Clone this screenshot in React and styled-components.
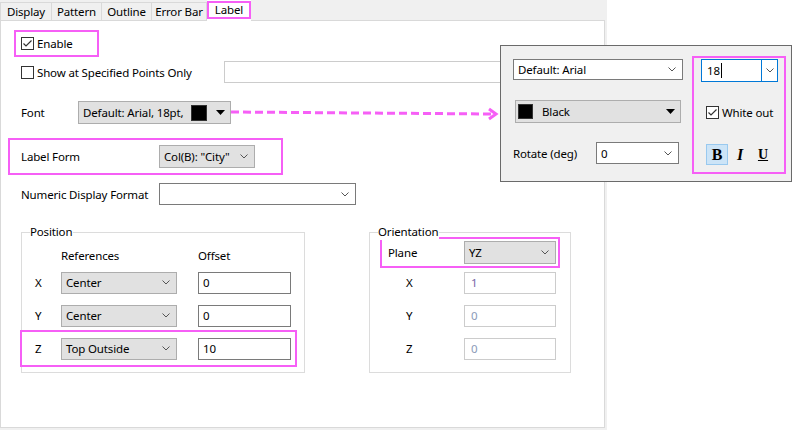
import React from 'react';
import styled, { createGlobalStyle } from 'styled-components';

const MAGENTA = '#f65ff6';

const GlobalStyle = createGlobalStyle`
  html, body { margin: 0; padding: 0; background: #fff; }
  body {
    font-family: "Segoe UI", "Noto Sans", "Open Sans", sans-serif;
    font-size: 11.5px;
    letter-spacing: -0.15px;
    color: #000;
  }
  * { box-sizing: border-box; }
`;

const Page = styled.div`
  position: relative;
  width: 797px;
  height: 430px;
  overflow: hidden;
`;

const Dialog = styled.div`
  width: 607px;
  height: 430px;
  background: #f0f0f0;
  display: flex;
  flex-direction: column;
`;

const TabStrip = styled.div`
  display: flex;
  align-items: flex-end;
  height: 20px;
`;

const Tab = styled.div`
  position: relative;
  width: ${p => p.w}px;
  height: ${p => (p.active ? 21 : 18)}px;
  margin-bottom: ${p => (p.active ? -1 : 0)}px;
  z-index: ${p => (p.active ? 1 : 0)};
  background: ${p => (p.active ? '#fff' : '#f0f0f0')};
  border: ${p => (p.active ? 'none' : '1px solid #d9d9d9')};
  border-bottom: none;
  border-right: ${p => (p.last ? '1px solid #d9d9d9' : 'none')};
  padding: ${p => (p.active ? '1px 0 2px 0' : '0')};
  display: flex;
  align-items: center;
  justify-content: center;
  line-height: 16px;
  white-space: nowrap;
`;

const ActiveTabLabel = styled.div`
  width: 100%;
  height: 18px;
  border: 2px solid ${MAGENTA};
  display: flex;
  align-items: center;
  justify-content: center;
`;

const Body = styled.div`
  width: 605px;
  height: 408px;
  background: #fff;
  border: 1px solid #d9d9d9;
  padding-top: 9px;
  display: flex;
  flex-direction: column;
`;

const Row = styled.div`
  display: flex;
  align-items: center;
  height: ${p => p.h}px;
  margin-top: ${p => p.mt || 0}px;
  padding-left: 20px;
`;

const HighlightRow = styled.div`
  display: flex;
  align-items: center;
  width: ${p => p.w}px;
  height: ${p => p.h}px;
  margin-top: ${p => p.mt || 0}px;
  margin-left: ${p => p.ml}px;
  padding-left: ${p => p.pl}px;
  border: 2px solid ${MAGENTA};
`;

const Label = styled.span`
  display: inline-block;
  width: ${p => (p.w ? `${p.w}px` : 'auto')};
  flex-shrink: 0;
  white-space: nowrap;
`;

const CheckLabel = styled.label`
  display: flex;
  align-items: center;
  gap: 3px;
  width: ${p => (p.w ? `${p.w}px` : 'auto')};
  white-space: nowrap;
`;

const Box = styled.span`
  width: 13px;
  height: 13px;
  border: 1px solid #333;
  background: #fff;
  display: inline-flex;
  align-items: center;
  justify-content: center;
  flex-shrink: 0;
`;

const TextField = styled.div`
  width: ${p => p.w}px;
  height: ${p => p.h || 22}px;
  border: 1px solid ${p => (p.disabled ? '#cccccc' : '#7a7a7a')};
  background: #fff;
  color: ${p => p.tone || '#000'};
  padding-left: ${p => p.pl || 4}px;
  display: flex;
  align-items: center;
  flex-shrink: 0;
`;

const Combo = styled.div`
  width: ${p => p.w}px;
  height: ${p => p.h || 22}px;
  border: 1px solid ${p => (p.flat ? '#adadad' : '#7a7a7a')};
  background: ${p => (p.flat ? '#e1e1e1' : '#fff')};
  padding: 0 6px 0 4px;
  display: flex;
  align-items: center;
  justify-content: space-between;
  flex-shrink: 0;
  white-space: nowrap;
`;

const Swatch = styled.span`
  display: inline-block;
  width: ${p => p.s}px;
  height: ${p => p.s}px;
  background: #000;
  border: 1px solid #333;
  flex-shrink: 0;
`;

const FontButton = styled.div`
  width: 153px;
  height: 23px;
  border: 1px solid #adadad;
  background: #e1e1e1;
  display: flex;
  align-items: center;
  padding-left: 4px;
  white-space: nowrap;
`;

const FontText = styled.span`
  width: 108px;
  flex-shrink: 0;
`;

const TriHolder = styled.span`
  display: flex;
  margin-left: ${p => p.ml || 0}px;
`;

const Group = styled.div`
  position: relative;
  width: ${p => p.w}px;
  height: 141px;
  border: 1px solid #dcdcdc;
  display: flex;
  flex-direction: column;
`;

const Legend = styled.span`
  position: absolute;
  top: -9px;
  left: 8px;
  background: #fff;
  padding: 0 1px 0 0;
  line-height: 16px;
`;

const GroupsRow = styled.div`
  display: flex;
  gap: 64px;
  margin-top: 27px;
  padding-left: 20px;
`;

const HeaderRow = styled.div`
  display: flex;
  align-items: center;
  height: 21px;
  margin-top: 12px;
  padding-left: 39px;
`;

const GridRow = styled.div`
  display: flex;
  align-items: center;
  width: ${p => (p.w ? `${p.w}px` : 'auto')};
  height: 33px;
  padding-left: ${p => p.pl}px;
  margin-top: ${p => p.mt || 0}px;
  outline: ${p => (p.mark ? `2px solid ${MAGENTA}` : 'none')};
`;

const Spacer = styled.span`
  width: ${p => p.w}px;
  flex-shrink: 0;
`;

const PlaneRow = styled.div`
  display: flex;
  align-items: center;
  width: 180px;
  height: 31px;
  margin: 4px 0 0 10px;
  padding-left: 6px;
  border: 2px solid ${MAGENTA};
`;

const Popup = styled.div`
  position: absolute;
  left: 500px;
  top: 45px;
  width: 292px;
  height: 137px;
  background: #f0f0f0;
  border: 1px solid #6a6a6a;
  padding: 13px 0 0 12px;
  display: flex;
  align-items: flex-start;
  gap: 9px;
`;

const PopLeft = styled.div`
  width: 170px;
  display: flex;
  flex-direction: column;
`;

const ColorButton = styled.div`
  width: 166px;
  height: 23px;
  margin: 20px 0 0 2px;
  border: 1px solid #adadad;
  background: #e1e1e1;
  display: flex;
  align-items: center;
  padding: 0 5px 0 2px;
  gap: 9px;
`;

const ColorName = styled.span`
  flex: 1;
`;

const RotateRow = styled.div`
  display: flex;
  align-items: center;
  height: 22px;
  margin-top: 19px;
`;

const PopRight = styled.div`
  width: 94px;
  height: 118px;
  margin-top: -3px;
  border: 2px solid ${MAGENTA};
  padding: 1px 0 0 7px;
  display: flex;
  flex-direction: column;
`;

const SizeCombo = styled.div`
  width: 77px;
  height: 23px;
  border: 1px solid #0078d7;
  background: #fff;
  display: flex;
`;

const SizeText = styled.div`
  flex: 1;
  display: flex;
  align-items: center;
  padding-left: 5px;
  border-right: 1px solid #0078d7;
`;

const Caret = styled.span`
  display: inline-block;
  width: 1px;
  height: 15px;
  background: #000;
  margin-left: 1px;
`;

const SizeDrop = styled.div`
  width: 15px;
  display: flex;
  align-items: center;
  justify-content: center;
`;

const StyleRow = styled.div`
  display: flex;
  align-items: center;
  gap: 1px;
  margin-top: ${p => p.mt}px;
  height: ${p => p.h}px;
  padding-left: 5px;
`;

const StyleButton = styled.div`
  width: 22px;
  height: 21px;
  display: flex;
  align-items: center;
  justify-content: center;
  background: ${p => (p.on ? '#cce4f7' : 'transparent')};
  border: 1px solid ${p => (p.on ? '#99c9ef' : 'transparent')};
  font-family: "Liberation Serif", "Times New Roman", serif;
  font-weight: bold;
  letter-spacing: 0;
  font-size: ${p => p.fs || 15}px;
  font-style: ${p => (p.italic ? 'italic' : 'normal')};
  text-decoration: ${p => (p.under ? 'underline' : 'none')};
`;

const ArrowLayer = styled.svg`
  position: absolute;
  left: 0;
  top: 0;
  pointer-events: none;
`;

const Chevron = () => (
  <svg width="8" height="5" viewBox="0 0 8 5">
    <polyline points="0.5,0.5 4,4 7.5,0.5" fill="none" stroke="#555" strokeWidth="1" />
  </svg>
);

const DownTri = () => (
  <svg width="9" height="5" viewBox="0 0 9 5">
    <polygon points="0,0 9,0 4.5,5" fill="#000" />
  </svg>
);

const CheckBox = ({ checked }) => (
  <Box>
    {checked && (
      <svg width="11" height="11" viewBox="0 0 11 11">
        <polyline points="1.5,5.5 4,8 9.5,2.5" fill="none" stroke="#333" strokeWidth="1.2" />
      </svg>
    )}
  </Box>
);

const tabs = [
  { name: 'Display', w: 51 },
  { name: 'Pattern', w: 50 },
  { name: 'Outline', w: 50 },
  { name: 'Error Bar', w: 56 },
  { name: 'Label', w: 44, active: true },
];

const positionRows = [
  { axis: 'X', ref: 'Center', offset: '0' },
  { axis: 'Y', ref: 'Center', offset: '0' },
  { axis: 'Z', ref: 'Top Outside', offset: '10', mark: true },
];

const orientRows = [
  { axis: 'X', value: '1', tone: '#7466a6' },
  { axis: 'Y', value: '0', tone: '#8c9bb8' },
  { axis: 'Z', value: '0', tone: '#8c9bb8' },
];

export default function App() {
  return (
    <Page>
      <GlobalStyle />
      <Dialog>
        <TabStrip>
          {tabs.map((t, i) => (
            <Tab key={t.name} w={t.w} active={t.active} last={i === tabs.length - 2}>
              {t.active ? <ActiveTabLabel>{t.name}</ActiveTabLabel> : t.name}
            </Tab>
          ))}
        </TabStrip>
        <Body>
          <HighlightRow w={85} h={27} ml={13} pl={5}>
            <CheckLabel>
              <CheckBox checked />
              Enable
            </CheckLabel>
          </HighlightRow>

          <Row h={22} mt={4}>
            <CheckLabel w={203}>
              <CheckBox />
              Show at Specified Points Only
            </CheckLabel>
            <TextField w={300} disabled />
          </Row>

          <Row h={23} mt={18}>
            <Label w={57}>Font</Label>
            <FontButton>
              <FontText>Default: Arial, 18pt,</FontText>
              <Swatch s={16} />
              <TriHolder ml={9}>
                <DownTri />
              </TriHolder>
            </FontButton>
          </Row>

          <HighlightRow w={275} h={37} mt={14} ml={7} pl={11}>
            <Label w={138}>Label Form</Label>
            <Combo w={96} h={23} flat>
              <span>Col(B): "City"</span>
              <Chevron />
            </Combo>
          </HighlightRow>

          <Row h={22} mt={8}>
            <Label w={138}>Numeric Display Format</Label>
            <Combo w={197}>
              <span />
              <Chevron />
            </Combo>
          </Row>

          <GroupsRow>
            <Group w={284}>
              <Legend>Position</Legend>
              <HeaderRow>
                <Label w={137}>References</Label>
                <Label>Offset</Label>
              </HeaderRow>
              {positionRows.map(r => (
                <GridRow key={r.axis} pl={13} w={273} mark={r.mark}>
                  <Label w={26}>{r.axis}</Label>
                  <Combo w={116} flat>
                    <span>{r.ref}</span>
                    <Chevron />
                  </Combo>
                  <Spacer w={21} />
                  <TextField w={93}>{r.offset}</TextField>
                </GridRow>
              ))}
            </Group>

            <Group w={202}>
              <Legend>Orientation</Legend>
              <PlaneRow>
                <Label w={76}>Plane</Label>
                <Combo w={92} h={23} flat>
                  <span>YZ</span>
                  <Chevron />
                </Combo>
              </PlaneRow>
              {orientRows.map((r, i) => (
                <GridRow key={r.axis} pl={36} mt={i === 0 ? -2 : 0}>
                  <Label w={58}>{r.axis}</Label>
                  <TextField w={92} disabled tone={r.tone} pl={6}>
                    {r.value}
                  </TextField>
                </GridRow>
              ))}
            </Group>
          </GroupsRow>
        </Body>
      </Dialog>

      <ArrowLayer width="797" height="430">
        <line x1="231" y1="112" x2="493" y2="114" stroke={MAGENTA} strokeWidth="3" strokeDasharray="8 4" />
        <polyline points="489,109 496,114 489,119" fill="none" stroke={MAGENTA} strokeWidth="3" />
      </ArrowLayer>

      <Popup>
        <PopLeft>
          <Combo w={170} h={21}>
            <span>Default: Arial</span>
            <Chevron />
          </Combo>
          <ColorButton>
            <Swatch s={15} />
            <ColorName>Black</ColorName>
            <DownTri />
          </ColorButton>
          <RotateRow>
            <Label w={83}>Rotate (deg)</Label>
            <Combo w={83}>
              <span>0</span>
              <Chevron />
            </Combo>
          </RotateRow>
        </PopLeft>
        <PopRight>
          <SizeCombo>
            <SizeText>
              18
              <Caret />
            </SizeText>
            <SizeDrop>
              <Chevron />
            </SizeDrop>
          </SizeCombo>
          <StyleRow mt={17} h={26}>
            <CheckLabel>
              <CheckBox checked />
              White out
            </CheckLabel>
          </StyleRow>
          <StyleRow mt={19} h={21}>
            <StyleButton on fs={16}>B</StyleButton>
            <StyleButton italic fs={16}>I</StyleButton>
            <StyleButton under fs={14}>U</StyleButton>
          </StyleRow>
        </PopRight>
      </Popup>
    </Page>
  );
}
